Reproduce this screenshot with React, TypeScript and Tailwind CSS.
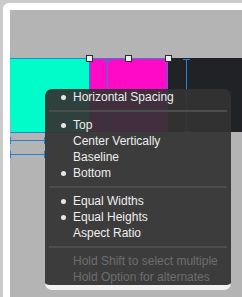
import React from "react";

type Item = { label: string; checked?: boolean; disabled?: boolean };

const groups: Item[][] = [
  [{ label: "Horizontal Spacing", checked: true }],
  [
    { label: "Top", checked: true },
    { label: "Center Vertically" },
    { label: "Baseline" },
    { label: "Bottom", checked: true },
  ],
  [
    { label: "Equal Widths", checked: true },
    { label: "Equal Heights", checked: true },
    { label: "Aspect Ratio" },
  ],
  [
    { label: "Hold Shift to select multiple", disabled: true },
    { label: "Hold Option for alternates", disabled: true },
  ],
];

const Handle: React.FC<{ x: number }> = ({ x }) => (
  <div
    className="absolute top-[45px] w-[7px] h-[7px] bg-[#eeeef2] border border-[#2a2a2a]"
    style={{ left: x - 3 }}
  />
);

const IBeam: React.FC<{ x: number; top: number; h: number }> = ({ x, top, h }) => (
  <div className="absolute flex flex-col items-center w-[7px]" style={{ left: x - 3, top }}>
    <div className="w-[7px] h-[1px] bg-[#2a7fd6]" />
    <div className="w-[1px] bg-[#2a7fd6]" style={{ height: h }} />
    <div className="w-[7px] h-[1px] bg-[#2a7fd6]" />
  </div>
);

const Dimension: React.FC<{ top: number }> = ({ top }) => (
  <div className="absolute left-0 flex items-center h-[7px]" style={{ top: top - 3 }}>
    <div className="w-[1px] h-[7px] bg-[#2a7fd6]" />
    <div className="w-[33px] h-[1px] bg-[#2a7fd6]" />
    <div className="w-[1px] h-[7px] bg-[#2a7fd6]" />
  </div>
);

export default function App() {
  return (
    <div
      className="w-[242px] h-[297px] bg-[#cbcbcb] pl-[3px] pt-[3px] overflow-hidden"
      style={{ fontFamily: '"Liberation Sans", Arial, sans-serif' }}
    >
      <div className="h-full bg-white rounded-tl-[6px] pl-[7px] pt-[7px]">
        {/* Canvas */}
        <div className="relative h-full bg-[#b4b4b4] pt-[48px]">
          <div className="flex h-[74px]">
            <div className="w-[79px] bg-[#00fdc9]" />
            <div className="w-[79px] bg-[#fe0ac7]" />
            <div className="flex-1 bg-[#212226]" />
          </div>

          {/* Selection guides */}
          <div className="absolute left-0 top-[48px] w-[158px] h-[1px] bg-[#1c8fd0]" />
          <div className="absolute left-0 top-[110px] w-[1px] h-[44px] bg-[#8fb0dc]" />
          <div className="absolute left-0 top-[42px] w-[1px] h-[6px] bg-[#8fb0dc]" />
          <div className="absolute left-0 top-[122px] w-[80px] h-[1px] bg-[#2a7fd6]" />
          <div className="absolute left-[79px] top-[48px] w-[1px] h-[74px] bg-[#2a7fd6]" />
          <div className="absolute left-[157px] top-[48px] w-[1px] h-[74px] bg-[#2a7fd6]" />
          <IBeam x={97} top={50} h={70} />
          <IBeam x={176} top={49} h={71} />
          <Dimension top={130} />
          <Dimension top={144} />
          <Handle x={79} />
          <Handle x={118} />
          <Handle x={158} />

          {/* Context menu */}
          <div className="absolute left-[35px] top-[79px] w-[186px] rounded-[7px] overflow-hidden bg-[#333333]/[0.93] border-b-[5px] border-[#f3f3f3] text-[12px]">
            {groups.map((group, gi) => (
              <div key={gi}>
                {gi > 0 && (
                  <div className="h-[12px] pt-[5px] px-[4px]">
                    <div className="h-[2px] bg-[#4d4d4d]" />
                  </div>
                )}
                {group.map((item) => (
                  <div
                    key={item.label}
                    className={`flex items-center h-[16px] leading-[16px] ${
                      item.disabled ? "text-[#6e6e6e]" : "text-[#eeeeee]"
                    }`}
                  >
                    <div className="w-[28px] flex items-center">
                      {item.checked && (
                        <div className="ml-[16px] w-[5px] h-[5px] rounded-full bg-[#e6e6e6]" />
                      )}
                    </div>
                    <span className="whitespace-nowrap">{item.label}</span>
                  </div>
                ))}
              </div>
            ))}
          </div>
        </div>
      </div>
    </div>
  );
}
